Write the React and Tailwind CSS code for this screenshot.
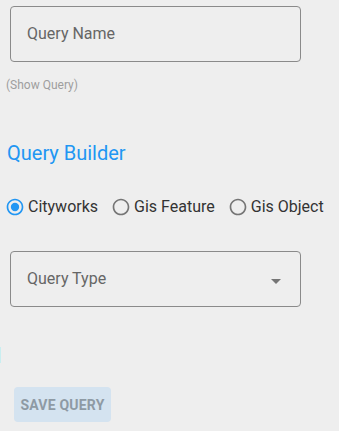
const OPTIONS = ['Cityworks', 'Gis Feature', 'Gis Object']

function Radio({ checked }) {
  return (
    <svg viewBox="0 0 24 24" className="w-5 h-5 shrink-0" fill={checked ? '#2196f3' : '#757575'}>
      <path d="M12 2C6.48 2 2 6.48 2 12s4.48 10 10 10 10-4.48 10-10S17.52 2 12 2zm0 18c-4.42 0-8-3.58-8-8s3.58-8 8-8 8 3.58 8 8-3.58 8-8 8z" />
      {checked && <circle cx="12" cy="12" r="5" />}
    </svg>
  )
}

export default function App() {
  return (
    <div className="min-h-screen bg-[#eeeeee] font-['Roboto',sans-serif] flex flex-col">
      {/* Query name input */}
      <div className="mt-[6px] ml-[10px] w-[291px] h-[56px] border border-[#8a8a8a] rounded flex items-center px-4 text-base text-[#666666]">
        Query Name
      </div>

      <div className="mt-[16px] ml-[6px] text-[12px] leading-[15px] text-[#9e9e9e]">(Show Query)</div>

      <div className="mt-[48px] ml-[7px] text-[20px] leading-[24px] text-[#2196f3]">Query Builder</div>

      {/* type radios */}
      <div className="mt-[30px] ml-[5px] flex items-center gap-[13px] h-6">
        {OPTIONS.map((o, i) => (
          <label key={o} className="flex items-center gap-[3px] text-base text-[#333333]">
            <Radio checked={i === 0} />
            {o}
          </label>
        ))}
      </div>

      {/* query type select */}
      <div className="mt-[32px] ml-[10px] w-[291px] h-[56px] border border-[#8a8a8a] rounded flex items-center justify-between pl-4 pr-[12px] text-base text-[#666666]">
        Query Type
        <svg viewBox="0 0 24 24" className="w-6 h-6 mt-[4px]" fill="#757575">
          <path d="M7 10l5 5 5-5z" />
        </svg>
      </div>

      <div className="mt-[40px] w-px h-4 bg-[#c9eef0]" />

      <button className="mt-[24px] ml-[14px] w-[97px] h-[35px] rounded bg-[#d4e3f0] text-sm font-bold text-[#8e9aa4] tracking-[0.2px]">
        SAVE QUERY
      </button>
    </div>
  )
}
